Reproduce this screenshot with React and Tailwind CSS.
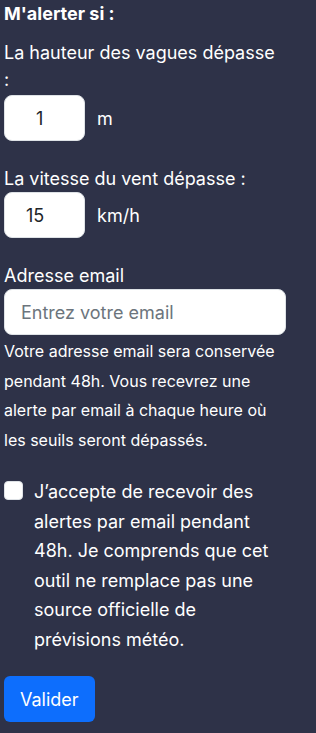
export default function App() {
  return (
    <div
      className="min-h-screen bg-[#2e3248] text-white px-1 pt-0 pb-4"
      style={{ fontFamily: "Inter, 'Noto Sans', sans-serif" }}
    >
      <form className="w-[282px]" onSubmit={(e) => e.preventDefault()}>
        <h3 className="text-[18px] font-bold leading-[27px] mb-3">M'alerter si :</h3>

        <div className="mb-6">
          <label className="block max-w-[276px] text-[18px] leading-[27px] mb-0.5">
            La hauteur des vagues dépasse :
          </label>
          <div className="flex items-center gap-3">
            <input
              type="text"
              defaultValue="1"
              className="w-[81px] h-[46px] rounded-lg bg-white text-[#212529] text-[18px] pl-[31px] outline-none border border-[#dee2e6]"
            />
            <span className="text-[18px]">m</span>
          </div>
        </div>

        <div className="mb-6">
          <label className="block text-[18px] leading-[27px]">La vitesse du vent dépasse :</label>
          <div className="flex items-center gap-3">
            <input
              type="text"
              defaultValue="15"
              className="w-[81px] h-[46px] rounded-lg bg-white text-[#212529] text-[18px] pl-[21px] outline-none border border-[#dee2e6]"
            />
            <span className="text-[18px]">km/h</span>
          </div>
        </div>

        <div>
          <label className="block text-[18px] leading-[27px]">Adresse email</label>
          <input
            type="email"
            placeholder="Entrez votre email"
            className="w-full h-[46px] rounded-lg bg-white text-[#212529] text-[18px] px-4 outline-none border border-[#dee2e6] placeholder:text-[#6c757d]"
          />
          <p className="text-[16px] leading-[29.5px] mt-0.5">
            Votre adresse email sera conservée pendant 48h. Vous recevrez une alerte par email à
            chaque heure où les seuils seront dépassés.
          </p>
        </div>

        <label className="flex items-start gap-[11px] mt-[22px]">
          <input
            type="checkbox"
            className="appearance-none shrink-0 w-[19px] h-[19px] mt-[4px] rounded bg-white border border-[#dee2e6]"
          />
          <span className="text-[18px] leading-[29.5px]">
            J’accepte de recevoir des alertes par email pendant 48h. Je comprends que cet outil ne
            remplace pas une source officielle de prévisions météo.
          </span>
        </label>

        <button
          type="submit"
          className="mt-[22px] h-[46px] px-4 rounded-md bg-[#0d6efd] text-white text-[18px]"
        >
          Valider
        </button>
      </form>
    </div>
  );
}
